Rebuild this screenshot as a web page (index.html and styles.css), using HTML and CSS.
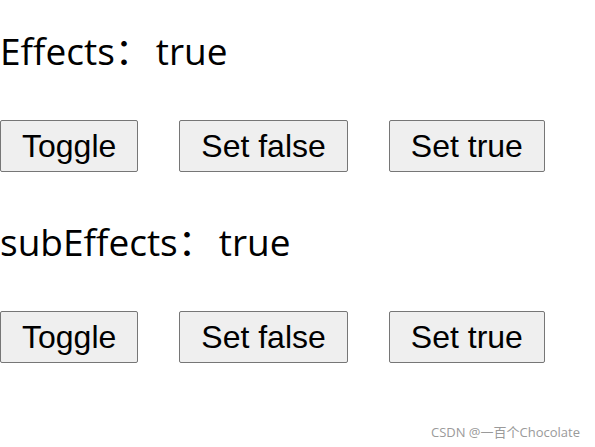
FILE: index.html
```html
<!DOCTYPE html>
<html>
<head>
<meta charset="utf-8">
<link rel="stylesheet" href="styles.css">
</head>
<body>
<div class="page">
  <div class="label">Effects：<span class="val">true</span></div>
  <div class="row">
    <button class="btn">Toggle</button>
    <button class="btn">Set false</button>
    <button class="btn">Set true</button>
  </div>
  <div class="label">subEffects：<span class="val">true</span></div>
  <div class="row">
    <button class="btn">Toggle</button>
    <button class="btn">Set false</button>
    <button class="btn">Set true</button>
  </div>
</div>
<div class="mark">CSDN @一百个Chocolate</div>
</body>
</html>
```
FILE: styles.css
```css
html, body {
  margin: 0;
  padding: 0;
  background: #fff;
}
.page {
  display: flex;
  flex-direction: column;
  align-items: flex-start;
  padding-top: 26px;
}
.label {
  font-family: "Open Sans", "Noto Sans CJK SC", sans-serif;
  font-size: 37px;
  line-height: 50px;
  color: #000;
  margin-bottom: 44px;
}
.val {
  margin-left: 4px;
}
.row {
  display: flex;
  gap: 41px;
  margin-bottom: 45px;
}
.btn {
  font-family: "Liberation Sans", Arial, sans-serif;
  font-size: 32px;
  height: 52px;
  padding: 0 21px;
  background: #efefef;
  border: 1px solid #767676;
  border-radius: 2px;
  color: #000;
}
.mark {
  position: absolute;
  right: 15px;
  bottom: 6px;
  font-family: "Open Sans", "Noto Sans CJK SC", sans-serif;
  font-size: 13px;
  color: #9a9a9a;
}
```
